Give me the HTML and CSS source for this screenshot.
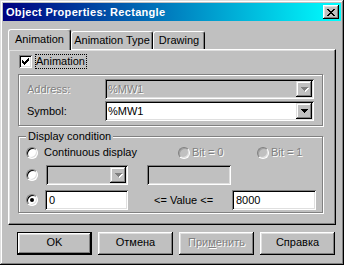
FILE: index.html
```html
<!DOCTYPE html>
<html>
  <head>
    <meta charset="UTF-8" />
    <title>Object Properties: Rectangle</title>
    <link rel="stylesheet" href="styles.css">
  </head>
  <body>
    <div class="window">
      <div class="titlebar">
        <span class="title">Object Properties: Rectangle</span>
        <div class="close">
          <svg width="8" height="7" viewBox="0 0 8 7" shape-rendering="crispEdges">
            <path d="M0 0h2v1h-2z M6 0h2v1h-2z M1 1h2v1h-2z M5 1h2v1h-2z M2 2h4v1h-4z M3 3h2v1h-2z M2 4h4v1h-4z M1 5h2v1h-2z M5 5h2v1h-2z M0 6h2v1h-2z M6 6h2v1h-2z" fill="#000"/>
          </svg>
        </div>
      </div>

      <div class="dialog">
        <div class="tabs">
          <div class="tab active">Animation</div>
          <div class="tab tab-type">Animation Type</div>
          <div class="tab tab-draw">Drawing</div>
        </div>

        <div class="panel">
          <div class="check-row">
            <span class="checkbox">
              <svg width="7" height="7" viewBox="0 0 7 7" shape-rendering="crispEdges">
                <path d="M6 0h1v1h-1z M5 1h2v1h-2z M0 2h1v1h-1z M4 2h3v1h-3z M0 3h2v1h-2z M3 3h3v1h-3z M0 4h5v1h-5z M1 5h3v1h-3z M2 6h1v1h-1z" fill="#000"/>
              </svg>
            </span>
            <span class="focus">Animation</span>
          </div>

          <div class="group group-anim">
            <div class="field-row">
              <span class="field-label disabled">Address:</span>
              <div class="combo combo-wide is-disabled">
                <span class="combo-text disabled">%MW1</span>
                <span class="drop">
                  <svg width="8" height="5" viewBox="0 0 8 5" shape-rendering="crispEdges">
                    <path d="M1 1h7v1h-7z M2 2h5v1h-5z M3 3h3v1h-3z M4 4h1v1h-1z" fill="#fff"/>
                    <path d="M0 0h7v1h-7z M1 1h5v1h-5z M2 2h3v1h-3z M3 3h1v1h-1z" fill="#808080"/>
                  </svg>
                </span>
              </div>
            </div>
            <div class="field-row">
              <span class="field-label">Symbol:</span>
              <div class="combo combo-wide">
                <span class="combo-text">%MW1</span>
                <span class="drop">
                  <svg width="8" height="5" viewBox="0 0 8 5" shape-rendering="crispEdges">
                    <path d="M0 0h7v1h-7z M1 1h5v1h-5z M2 2h3v1h-3z M3 3h1v1h-1z" fill="#000"/>
                  </svg>
                </span>
              </div>
            </div>
          </div>

          <fieldset class="group group-cond">
            <legend>Display condition</legend>
            <div class="cond-row row-first">
              <span class="radio"></span>
              <span class="radio-label">Continuous display</span>
              <span class="bit">
                <span class="radio is-disabled"></span>
                <span class="bit-label disabled">Bit = 0</span>
              </span>
              <span class="bit">
                <span class="radio is-disabled"></span>
                <span class="bit-label disabled">Bit = 1</span>
              </span>
            </div>
            <div class="cond-row row-second">
              <span class="radio"></span>
              <div class="combo combo-small is-disabled">
                <span class="combo-text"></span>
                <span class="drop">
                  <svg width="8" height="5" viewBox="0 0 8 5" shape-rendering="crispEdges">
                    <path d="M1 1h7v1h-7z M2 2h5v1h-5z M3 3h3v1h-3z M4 4h1v1h-1z" fill="#fff"/>
                    <path d="M0 0h7v1h-7z M1 1h5v1h-5z M2 2h3v1h-3z M3 3h1v1h-1z" fill="#808080"/>
                  </svg>
                </span>
              </div>
              <div class="edit edit-bit is-disabled"></div>
            </div>
            <div class="cond-row row-third">
              <span class="radio checked"></span>
              <div class="edit edit-min">0</div>
              <span class="range-label">&lt;= Value &lt;=</span>
              <div class="edit edit-max">8000</div>
            </div>
          </fieldset>
        </div>

        <div class="buttons">
          <div class="btn default">OK</div>
          <div class="btn">Отмена</div>
          <div class="btn disabled">При<u>м</u>енить</div>
          <div class="btn">Справка</div>
        </div>
      </div>
    </div>
  </body>
</html>
```

FILE: styles.css
```css
* {
  box-sizing: border-box;
  margin: 0;
  padding: 0;
}

body {
  --face: #c0c0c0;
  --light: #dfdfdf;
  --shadow: #808080;
  background: var(--face);
  font-family: "Liberation Sans", Arial, sans-serif;
  font-size: 11px;
  line-height: 13px;
  color: #000;
}

.window {
  width: 344px;
  height: 265px;
  padding: 3px;
  background: var(--face);
  box-shadow: inset -1px -1px #000, inset 1px 1px var(--light),
    inset -2px -2px var(--shadow), inset 2px 2px #fff;
  display: flex;
  flex-direction: column;
}

/* title bar */
.titlebar {
  height: 18px;
  display: flex;
  align-items: center;
  justify-content: space-between;
  padding: 0 2px 0 3px;
  background: linear-gradient(to right, #000080, #00ffff);
}
.title {
  color: #fff;
  font-weight: bold;
  font-size: 11px;
  letter-spacing: 0.3px;
}
.close {
  width: 16px;
  height: 14px;
  display: flex;
  align-items: center;
  justify-content: center;
  background: var(--face);
  box-shadow: inset -1px -1px #000, inset 1px 1px #fff,
    inset -2px -2px var(--shadow), inset 2px 2px var(--light);
}
.close svg {
  display: block;
  margin: 0 0 0 -1px;
}

.dialog {
  flex: 1;
  padding: 0 5px;
  display: flex;
  flex-direction: column;
}

/* tabs */
.tabs {
  margin-top: 8px;
  height: 20px;
  display: flex;
  align-items: flex-end;
}
.tab {
  height: 18px;
  padding-top: 2px;
  text-align: center;
  border: 1px solid;
  border-color: #fff #000 transparent #fff;
  border-bottom: 0;
  border-radius: 3px 3px 0 0;
  box-shadow: inset -1px 0 var(--shadow);
  background: var(--face);
}
.tab.active {
  width: 63px;
  height: 21px;
  padding-top: 3px;
  margin-bottom: -1px;
  position: relative;
  z-index: 1;
}
.tab-type {
  width: 82px;
}
.tab-draw {
  width: 52px;
}

.panel {
  height: 176px;
  border: 1px solid;
  border-color: #fff #000 #000 #fff;
  box-shadow: inset -1px -1px var(--shadow), inset 1px 1px var(--light);
}

/* checkbox row */
.check-row {
  height: 13px;
  margin: 5px 0 0 10px;
  display: flex;
  align-items: center;
}
.checkbox {
  width: 13px;
  height: 13px;
  display: flex;
  align-items: center;
  justify-content: center;
  background: #fff;
  box-shadow: inset 1px 1px var(--shadow), inset -1px -1px #fff,
    inset 2px 2px #000, inset -2px -2px var(--light);
}
.focus {
  margin-left: 3px;
  padding: 0 1px 0 0;
  height: 15px;
  line-height: 13px;
  border: 1px dotted #000;
}

/* group boxes */
.group {
  width: 305px;
  margin-left: 9px;
  border: 1px solid var(--shadow);
  box-shadow: inset 1px 1px #fff, 1px 1px #fff;
}
.group-anim {
  height: 52px;
  margin-top: 6px;
  padding: 4px 8px 0;
  display: flex;
  flex-direction: column;
  gap: 2px;
}
.field-row {
  height: 20px;
  display: flex;
  align-items: center;
}
.field-label {
  width: 78px;
}

.disabled {
  color: var(--shadow);
  text-shadow: 1px 1px 0 #fff;
}

/* combo boxes and edits */
.combo,
.edit {
  height: 20px;
  flex: none;
  background: #fff;
  box-shadow: inset 1px 1px var(--shadow), inset -1px -1px #fff,
    inset 2px 2px #000, inset -2px -2px var(--light);
}
.combo {
  display: flex;
  padding: 2px;
}
.combo.is-disabled,
.edit.is-disabled {
  background: var(--face);
}
.combo-wide {
  width: 209px;
}
.combo-small {
  width: 82px;
}
.combo-text {
  flex: 1;
  padding-left: 1px;
  line-height: 16px;
}
.drop {
  width: 16px;
  height: 16px;
  display: flex;
  align-items: center;
  justify-content: center;
  background: var(--face);
  box-shadow: inset -1px -1px #000, inset 1px 1px var(--light),
    inset -2px -2px var(--shadow), inset 2px 2px #fff;
}
.drop svg {
  display: block;
  margin: 1px 0 0 1px;
}
.edit {
  padding: 2px 0 0 4px;
  line-height: 16px;
}

/* display condition */
.group-cond {
  margin-top: 4px;
  padding: 3px 0 2px;
  min-width: 0;
}
.group-cond legend {
  margin-left: 7px;
  padding: 0 2px 0 2px;
  line-height: 13px;
  background: var(--face);
}
.cond-row {
  display: flex;
  align-items: center;
  padding-left: 7px;
}
.cond-row > * {
  flex: none;
}
.row-first {
  height: 13px;
  margin-bottom: 6px;
}
.row-second {
  height: 20px;
  margin-bottom: 5px;
}
.row-third {
  height: 20px;
}

.radio {
  width: 12px;
  height: 12px;
  flex: none;
  border-radius: 50%;
  border: 1px solid;
  border-color: var(--shadow) #fff #fff var(--shadow);
  background: #fff;
  box-shadow: inset 1px 1px #000, inset -1px -1px var(--light);
  display: flex;
  align-items: center;
  justify-content: center;
}
.radio.is-disabled {
  background: var(--face);
  box-shadow: inset 1px 1px #a0a0a0, inset -1px -1px var(--light);
}
.radio.checked::after {
  content: "";
  width: 4px;
  height: 4px;
  border-radius: 50%;
  background: #000;
}
.radio-label {
  width: 134px;
  margin-left: 6px;
}
.bit {
  width: 79px;
  display: flex;
  align-items: center;
}
.bit-label {
  margin-left: 2px;
}

.row-second .combo-small {
  margin-left: 8px;
}
.edit-bit {
  width: 84px;
  margin-left: 19px;
}
.edit-min {
  width: 83px;
  margin-left: 7px;
}
.range-label {
  width: 78px;
  margin-left: 26px;
}
.edit-max {
  width: 84px;
}

/* buttons */
.buttons {
  margin-top: 7px;
  padding-left: 9px;
  display: flex;
  gap: 6px;
}
.btn {
  width: 75px;
  height: 23px;
  line-height: 21px;
  text-align: center;
  background: var(--face);
  box-shadow: inset -1px -1px #000, inset 1px 1px #fff,
    inset -2px -2px var(--shadow), inset 2px 2px var(--light);
}
.btn.default {
  border: 1px solid #000;
  line-height: 19px;
}
.btn u {
  text-decoration-thickness: 1px;
}
```
